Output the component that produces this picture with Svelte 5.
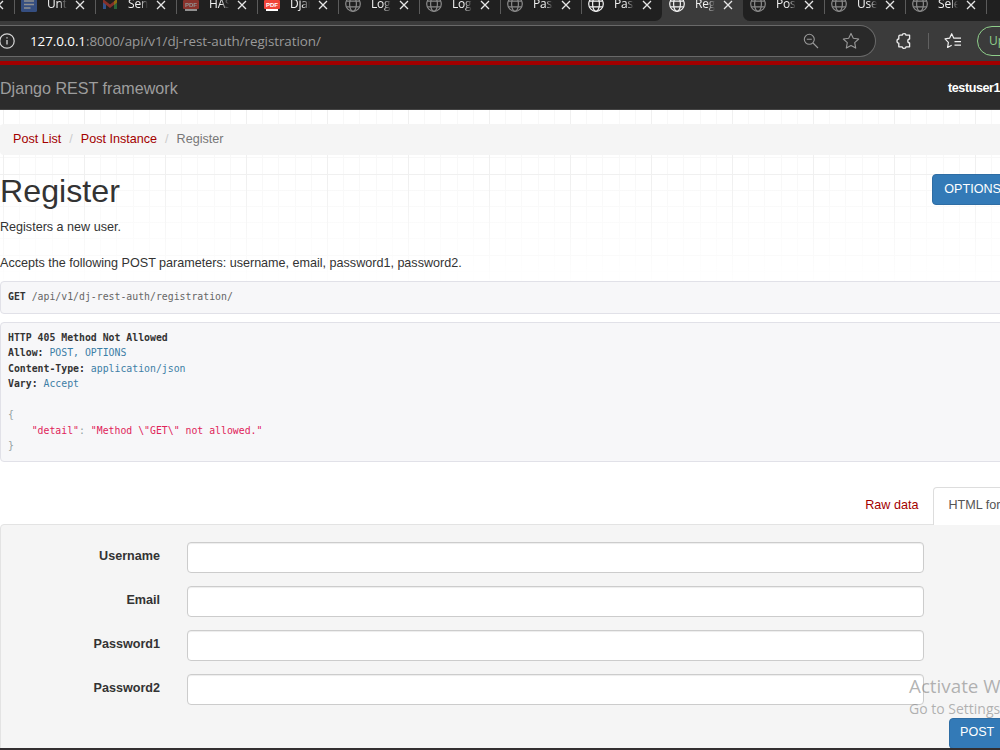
<script lang="ts">
	type Tab = {
		title: string;
		icon: 'doc' | 'mail' | 'pdf' | 'globe';
		dim?: boolean;
		active?: boolean;
	};

	const tabs: Tab[] = [
		{ title: 'Unti', icon: 'doc', dim: true },
		{ title: 'Sen', icon: 'mail', dim: true },
		{ title: 'HAS', icon: 'pdf', dim: true },
		{ title: 'Djan', icon: 'pdf' },
		{ title: 'Log', icon: 'globe', dim: true },
		{ title: 'Log', icon: 'globe', dim: true },
		{ title: 'Pass', icon: 'globe', dim: true },
		{ title: 'Pass', icon: 'globe' },
		{ title: 'Reg', icon: 'globe', active: true },
		{ title: 'Pos', icon: 'globe', dim: true },
		{ title: 'Use', icon: 'globe', dim: true },
		{ title: 'Sele', icon: 'globe', dim: true }
	];

	const fields = ['Username', 'Email', 'Password1', 'Password2'];
	let values: string[] = $state(fields.map(() => ''));
</script>

{#snippet close()}
	<svg class="close" width="10" height="10" viewBox="0 0 10 10" fill="none">
		<path d="M1 1L9 9M9 1L1 9" stroke="#e6e6e6" stroke-width="1.3" />
	</svg>
{/snippet}

<div class="window">
	<div class="tabstrip">
		<div class="tab-rest">{@render close()}</div>
		{#each tabs as tab}
			<div class="tab" class:active={tab.active}>
				<div class="favicon" class:dim={tab.dim}>
					{#if tab.icon === 'globe'}
						<svg width="16" height="16" viewBox="0 0 16 16" fill="none" stroke="#f2f2f2" stroke-width="1.2">
							<circle cx="8" cy="8" r="7.3" />
							<ellipse cx="8" cy="8" rx="3.4" ry="7.3" />
							<path d="M1.3 5.2H14.7M1.3 10.8H14.7" />
						</svg>
					{:else if tab.icon === 'doc'}
						<svg width="16" height="16" viewBox="0 0 16 16">
							<rect width="16" height="16" rx="1.5" fill="#4a7de0" />
							<path d="M3 5H13M3 8.5H13M3 12H9.5" stroke="#fff" stroke-width="1.5" />
						</svg>
					{:else if tab.icon === 'mail'}
						<svg width="16" height="16" viewBox="0 0 16 16">
							<path d="M1 4V13H4V7Z" fill="#4285f4" />
							<path d="M15 4V13H12V7Z" fill="#34a853" />
							<path d="M1 3L8 8.4L15 3V6.6L8 12L1 6.6Z" fill="#ea4335" />
							<path d="M12 5.3L15 3V6.6L12 8.9Z" fill="#fbbc04" />
						</svg>
					{:else}
						<svg width="16" height="16" viewBox="0 0 16 16">
							<path d="M2 0H14V15H2Z" fill="#fff" />
							<rect y="4" width="16" height="9" rx="1" fill="#f04438" />
							<text x="8" y="10.8" class="pdf">PDF</text>
						</svg>
					{/if}
				</div>
				<span class="title">{tab.title}</span>
				{@render close()}
			</div>
		{/each}
		<div class="tab-end"></div>
	</div>

	<div class="toolbar">
		<div class="address">
			<svg class="info" width="16" height="16" viewBox="0 0 16 16" fill="none" stroke="#d6d6d6">
				<circle cx="8" cy="8" r="7.2" stroke-width="1.2" />
				<path d="M8 7V11.6M8 4.2V5.6" stroke-width="1.3" />
			</svg>
			<span class="url"><b>127.0.0.1</b>:8000/api/v1/dj-rest-auth/registration/</span>
			<svg class="zoom" width="16" height="16" viewBox="0 0 16 16" fill="none" stroke="#9a9a9a" stroke-width="1.1">
				<circle cx="6.3" cy="6.3" r="5" />
				<path d="M10 10L15 15M3.8 6.3H8.8" />
			</svg>
			<svg width="18" height="18" viewBox="0 0 18 18" fill="none" stroke="#9a9a9a" stroke-width="1.1" stroke-linejoin="round">
				<path d="M9 1.4L11.3 6.3L16.7 7L12.7 10.7L13.7 16.1L9 13.5L4.3 16.1L5.3 10.7L1.3 7L6.7 6.3Z" />
			</svg>
		</div>
		<svg class="puzzle" width="18" height="18" viewBox="0 0 18 18" fill="none" stroke="#f0f0f0" stroke-width="1.3" stroke-linejoin="round">
			<path d="M5 3.2H7.2C7.2 1 11 1 11 3.2H14.6V7C12.2 7 12.2 11 14.6 11V14.8H11C11 17 7.2 17 7.2 14.8H3.8V11.2C1.4 11.2 1.4 7 3.8 7V4.4Q3.8 3.2 5 3.2Z" />
		</svg>
		<div class="divider"></div>
		<svg class="favorites" width="18" height="18" viewBox="0 0 18 18" fill="none" stroke="#f0f0f0" stroke-width="1.2" stroke-linejoin="round">
			<path d="M17 6.2H9.8L7.7 1.7L5.6 6.2L1 6.9L4.4 10.3L3.6 15.5L7.7 13.2M10.5 9.7H17M10.5 13.2H17" />
		</svg>
		<button class="update">Update</button>
	</div>

	<nav class="navbar">
		<span class="brand">Django REST framework</span>
		<span class="user">testuser1</span>
	</nav>

	<main>
		<ul class="breadcrumb">
			<li><a href="#list">Post List</a></li>
			<li><a href="#instance">Post Instance</a></li>
			<li>Register</li>
		</ul>

		<div class="heading">
			<h1>Register</h1>
			<button class="btn">OPTIONS</button>
		</div>

		<p>Registers a new user.</p>
		<p>Accepts the following POST parameters: username, email, password1, password2.</p>

		<pre class="request"><b>GET</b> /api/v1/dj-rest-auth/registration/</pre>
		<pre class="response"><b>HTTP 405 Method Not Allowed</b>
<b>Allow:</b> <span class="lit">POST, OPTIONS</span>
<b>Content-Type:</b> <span class="lit">application/json</span>
<b>Vary:</b> <span class="lit">Accept</span>

<span class="pun">{'{'}</span>
    <span class="str">"detail"</span><span class="pun">:</span> <span class="str">"Method \"GET\" not allowed."</span>
<span class="pun">{'}'}</span></pre>

		<div class="form-tabs">
			<a href="#raw">Raw data</a>
			<a href="#html" class="current">HTML form</a>
		</div>

		<form class="well">
			{#each fields as field, i}
				<div class="form-group">
					<label for={field}>{field}</label>
					<input id={field} type={field.startsWith('Password') ? 'password' : 'text'} bind:value={values[i]} />
				</div>
			{/each}
			<button type="button" class="btn submit">POST</button>
		</form>
	</main>

	<div class="watermark">
		<div class="line1">Activate Windows</div>
		<div class="line2">Go to Settings to activate Windows.</div>
	</div>
	<div class="taskbar"></div>
</div>

<style>
	:global(body) {
		background: #fff;
	}

	.window {
		position: relative;
		width: 1000px;
		height: 750px;
		overflow: hidden;
		background: #fff;
		color: #333;
		font-family: 'Liberation Sans', Arial, sans-serif;
		font-size: 12.6px;
		line-height: 18px;
	}

	.window :global(*) {
		box-sizing: border-box;
	}

	svg {
		flex-shrink: 0;
		display: block;
	}

	/* browser chrome */
	.tabstrip {
		display: flex;
		height: 21px;
		background: #3b3b3b;
		overflow: hidden;
		font-family: 'Open Sans', 'Noto Sans', sans-serif;
	}

	.tab-rest {
		flex: 0 0 14px;
		background: #202020;
		overflow: hidden;
	}

	.tab-rest .close {
		margin-left: -6px;
	}

	.tab {
		flex: 0 0 81px;
		display: flex;
		background: #202020;
		border-left: 1px solid #5b5b5b;
		border-image: linear-gradient(#5b5b5b 14px, #202020 14px) 1;
		color: #f2f2f2;
	}

	.tab.active {
		background: #3b3b3b;
		border-image: none;
		border-color: #3b3b3b;
	}

	.tab:has(+ .active) {
		border-bottom-right-radius: 7px;
	}

	.tab.active + .tab {
		border-image: none;
		border-color: #202020;
		border-bottom-left-radius: 7px;
	}

	.tab-end {
		flex: 1;
		background: #202020;
		border-left: 1px solid #5b5b5b;
		border-image: linear-gradient(#5b5b5b 14px, #202020 14px) 1;
	}

	.favicon {
		margin: -4px 0 0 6px;
		height: 16px;
	}

	.favicon.dim {
		opacity: 0.5;
	}

	.pdf {
		font: bold 6px 'Liberation Sans', sans-serif;
		fill: #fff;
		text-anchor: middle;
	}

	.title {
		width: 20px;
		margin: -5px 8px 0 10px;
		overflow: hidden;
		white-space: nowrap;
		font-size: 12px;
		letter-spacing: -0.2px;
		mask-image: linear-gradient(90deg, #000 60%, transparent);
	}

	.toolbar {
		display: flex;
		align-items: center;
		height: 40px;
		padding-bottom: 1px;
		background: #3b3b3b;
	}

	.address {
		flex: 0 0 876px;
		display: flex;
		align-items: center;
		height: 32px;
		padding-right: 15px;
		background: #292929;
		border: 1px solid #696969;
		border-left: 0;
		border-radius: 0 16px 16px 0;
		color: #9a9a9a;
		font-family: 'Open Sans', 'Noto Sans', sans-serif;
	}

	.info {
		margin-left: -1px;
	}

	.url {
		flex: 1;
		margin-left: 15px;
		font-size: 13.4px;
		letter-spacing: -0.06px;
	}

	.url b {
		color: #fff;
		font-weight: 400;
	}

	.zoom {
		margin-right: 23px;
	}

	.puzzle {
		margin-left: 19px;
	}

	.divider {
		flex: 0 0 1px;
		height: 16px;
		margin-left: 15px;
		background: #616161;
	}

	.favorites {
		margin-left: 15px;
	}

	.update {
		flex: 0 0 90px;
		height: 30px;
		margin-left: 15px;
		padding: 0 0 0 11px;
		background: transparent;
		border: 1px solid #8fcf8b;
		border-radius: 15px;
		color: #8fcf8b;
		text-align: left;
		font: 12px 'Open Sans', sans-serif;
	}

	/* page */
	.navbar {
		display: flex;
		align-items: center;
		justify-content: space-between;
		height: 49px;
		padding-top: 2px;
		background: #2c2c2c;
		border-top: 4px solid #a30000;
		border-bottom: 1px solid #444;
	}

	.brand {
		color: #9d9d9d;
		font-size: 16.1px;
	}

	.user {
		color: #fff;
		font-weight: bold;
		letter-spacing: -0.45px;
	}

	main {
		height: 640px;
		padding-top: 14px;
		background:
			linear-gradient(rgba(255, 255, 255, 0) 70px, #fff 180px),
			repeating-linear-gradient(90deg, transparent 0 3px, #f0f0f0 3px 4px, transparent 4px 81px),
			repeating-linear-gradient(transparent 0 64px, #f0f0f0 64px 65px, transparent 65px 81px),
			repeating-linear-gradient(90deg, transparent 0 3px, #f8f8f8 3px 4px, transparent 4px 16.2px),
			repeating-linear-gradient(transparent 0 15px, #f8f8f8 15px 16px, transparent 16px 16.2px);
	}

	a {
		color: #a30000;
		text-decoration: none;
	}

	.breadcrumb {
		display: flex;
		height: 31px;
		margin: 0;
		padding: 6px 13px;
		background: #f5f5f5;
		border-radius: 4px 0 0 4px;
		list-style: none;
		color: #777;
	}

	.breadcrumb li + li::before {
		content: '/';
		padding: 0 8px;
		color: #ccc;
	}

	.heading {
		display: flex;
		justify-content: space-between;
		height: 63px;
		padding-top: 19px;
	}

	h1 {
		margin: 0;
		font-size: 32.2px;
		font-weight: 400;
		line-height: 35px;
	}

	.btn {
		height: 31px;
		padding: 0 11px 1px;
		background: #337ab7;
		border: 1px solid #2e6da4;
		border-radius: 4px;
		color: #fff;
		font: 12.6px 'Liberation Sans', Arial, sans-serif;
	}

	.heading .btn {
		margin-right: -13px;
	}

	p {
		margin: 0 0 18px;
		letter-spacing: -0.01px;
	}

	pre {
		margin: 0 -10px 8px 0;
		padding: 7px;
		background: #f7f7f9;
		border: 1px solid #e1e1e8;
		border-radius: 4px;
		font: 9.83px/15.43px 'DejaVu Sans Mono', monospace;
	}

	.request {
		height: 33px;
		margin-top: -9px;
		color: #666;
	}

	.request b {
		color: #333;
	}

	.response {
		height: 140px;
	}

	.lit {
		color: #3d7ea6;
	}

	.pun {
		color: #93a1a1;
	}

	.str {
		color: #e0245a;
	}

	.form-tabs {
		display: flex;
		justify-content: flex-end;
		height: 38px;
		margin: 25px -26px -1px 0;
	}

	.form-tabs a {
		padding: 8px 14px;
		border: 1px solid transparent;
	}

	.form-tabs .current {
		background: #fff;
		border-color: #ddd;
		border-bottom: 0;
		border-radius: 4px 4px 0 0;
		color: #555;
		z-index: 1;
	}

	.well {
		height: 240px;
		margin-right: -10px;
		padding-top: 17px;
		background: #f5f5f5;
		border: 1px solid #e3e3e3;
		border-radius: 4px;
	}

	.form-group {
		display: grid;
		grid-template-columns: 159px 737px;
		column-gap: 27px;
		height: 31px;
		margin-bottom: 13px;
	}

	label {
		padding-top: 5px;
		text-align: right;
		font-weight: bold;
	}

	input {
		height: 31px;
		border: 1px solid #ccc;
		border-radius: 4px;
		background: #fff;
		box-shadow: inset 0 1px 1px rgba(0, 0, 0, 0.075);
	}

	.submit {
		display: block;
		margin-left: 948px;
		padding: 0 10px 3px;
	}

	.watermark {
		position: absolute;
		left: 909px;
		top: 673px;
		color: rgba(130, 130, 130, 0.6);
		font-family: 'Open Sans', 'Noto Sans', sans-serif;
		white-space: nowrap;
		pointer-events: none;
	}

	.line1 {
		font-size: 18.8px;
		line-height: 26px;
	}

	.line2 {
		font-size: 14px;
		line-height: 20px;
	}

	.taskbar {
		position: absolute;
		left: 0;
		right: 0;
		bottom: 0;
		height: 2px;
		background: #332f31;
	}
</style>
